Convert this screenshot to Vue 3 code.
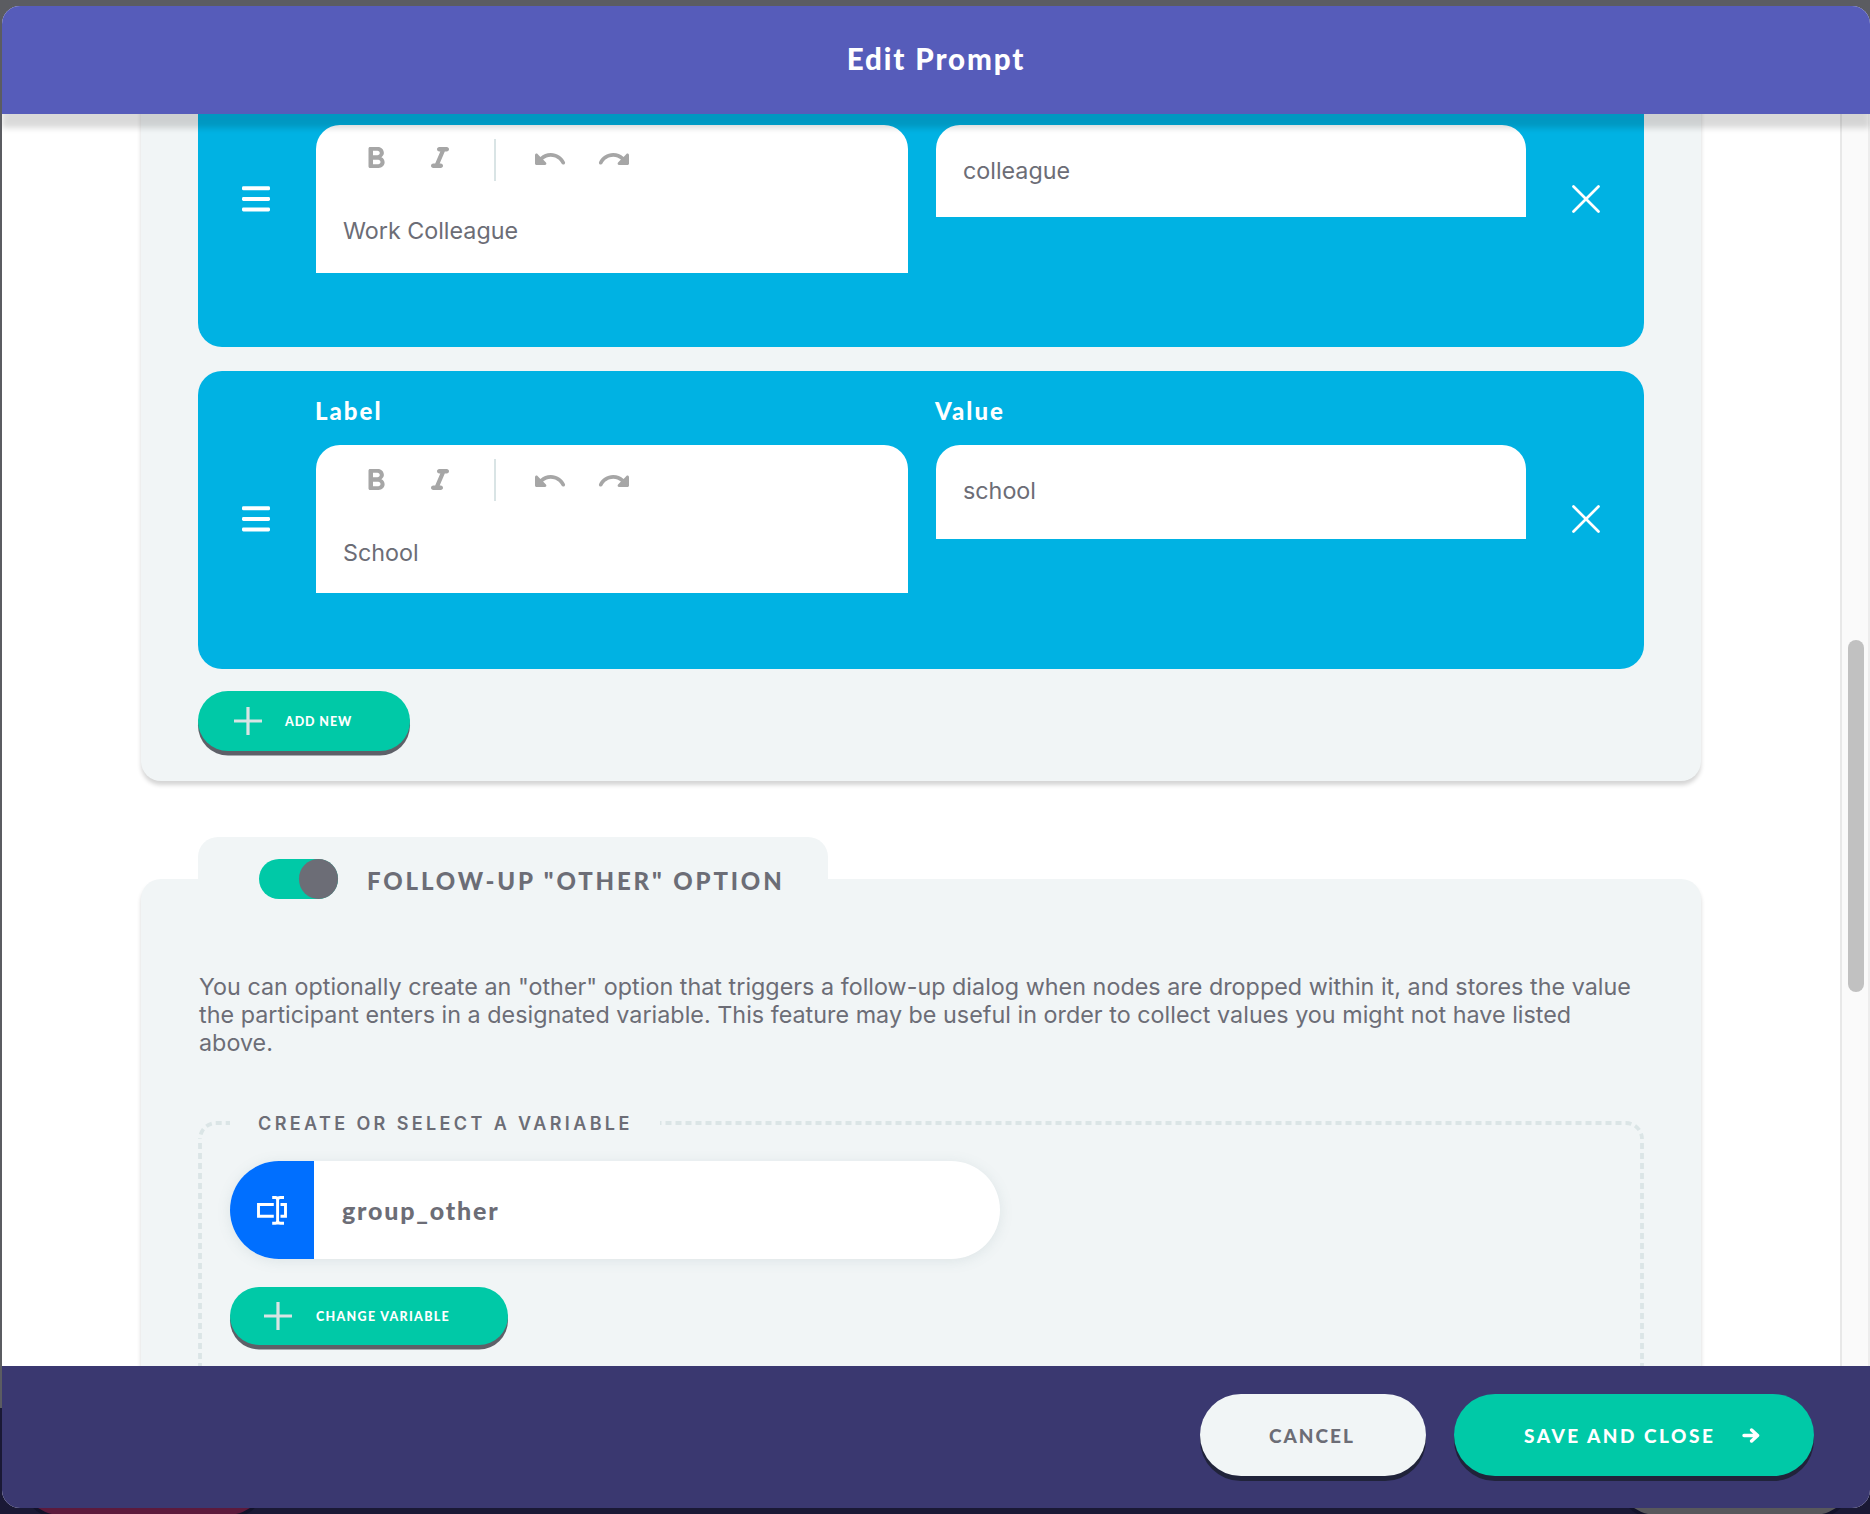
<script setup>
const options = [
  { id: 'colleague', label: 'Work Colleague', value: 'colleague', compact: true },
  { id: 'school', label: 'School', value: 'school', compact: false },
]

const icons = {
  bold: 'M15.6 10.79c.97-.67 1.65-1.77 1.65-2.79 0-2.26-1.75-4-4-4H8c-.55 0-1 .45-1 1v12c0 .55.45 1 1 1h5.78c2.07 0 3.96-1.69 3.97-3.77.01-1.53-.85-2.84-2.15-3.44zM10 6.5h3c.83 0 1.5.67 1.5 1.5s-.67 1.5-1.5 1.5h-3v-3zm3.5 9H10v-3h3.5c.83 0 1.5.67 1.5 1.5s-.67 1.5-1.5 1.5z',
  italic: 'M10 5.5c0 .83.67 1.5 1.5 1.5h.71l-3.42 8H7.5c-.83 0-1.5.67-1.5 1.5S6.67 18 7.5 18h5c.83 0 1.5-.67 1.5-1.5s-.67-1.5-1.5-1.5h-.71l3.42-8h1.29c.83 0 1.5-.67 1.5-1.5S17.33 4 16.5 4h-5c-.83 0-1.5.67-1.5 1.5z',
  undo: 'M12.5 8c-2.65 0-5.05.99-6.9 2.6L3.71 8.71C3.08 8.08 2 8.52 2 9.41V15c0 .55.45 1 1 1h5.59c.89 0 1.34-1.08.71-1.71l-1.91-1.91c1.39-1.16 3.16-1.88 5.12-1.88 3.16 0 5.89 1.84 7.19 4.5.27.56.91.84 1.5.64.71-.23 1.07-1.04.75-1.72C20.23 10.42 16.65 8 12.5 8z',
}
</script>

<template>
  <div class="backdrop">
    <div class="behind">
      <span class="behind-delete"></span>
      <span class="behind-cancel"></span>
    </div>
    <div class="modal">
      <header class="head"><h1>Edit Prompt</h1></header>

      <main class="body">
        <div class="content">
          <section class="panel options">
            <div v-for="o in options" :key="o.id" class="card" :class="{ compact: o.compact }">
              <div class="side handle">
                <svg width="28" height="26" viewBox="0 0 28 26">
                  <rect width="28" height="4" rx="1.4" y="0.3" /><rect width="28" height="4" rx="1.4" y="11" /><rect width="28" height="4" rx="1.4" y="21.5" />
                </svg>
              </div>
              <div class="col">
                <h4 v-if="!o.compact">Label</h4>
                <div class="field editor">
                  <div class="toolbar">
                    <svg class="tool" viewBox="0 0 24 24"><path :d="icons.bold" /></svg>
                    <svg class="tool" viewBox="0 0 24 24"><path :d="icons.italic" /></svg>
                    <i class="divider"></i>
                    <svg class="tool" viewBox="0 0 24 24"><path :d="icons.undo" /></svg>
                    <svg class="tool flip" viewBox="0 0 24 24"><path :d="icons.undo" /></svg>
                  </div>
                  <p>{{ o.label }}</p>
                </div>
              </div>
              <div class="col">
                <h4 v-if="!o.compact">Value</h4>
                <div class="field input"><p>{{ o.value }}</p></div>
              </div>
              <div class="side remove">
                <svg width="28" height="28" viewBox="0 0 28 28">
                  <path d="M1.5 1.5 26.5 26.5M26.5 1.5 1.5 26.5" stroke="#fff" stroke-width="2.7" stroke-linecap="round" />
                </svg>
              </div>
            </div>
            <button class="add">
              <svg width="28" height="28" viewBox="0 0 28 28"><path d="M14 0V28M0 14H28" /></svg>
              <span>ADD NEW</span>
            </button>
          </section>

          <section class="panel other">
            <div class="tab">
              <span class="toggle"><i></i></span>
              <h2>FOLLOW-UP "OTHER" OPTION</h2>
            </div>
            <p class="intro">
              You can optionally create an "other" option that triggers a follow-up dialog when nodes are dropped within it, and stores the value<br />
              the participant enters in a designated variable. This feature may be useful in order to collect values you might not have listed<br />
              above.
            </p>
            <div class="fieldset">
              <svg class="outline" width="1446" height="420" viewBox="0 0 1446 420">
                <path d="M32 2H18A16 16 0 0 0 2 18" stroke-dashoffset="1.7" />
                <path d="M2 22V420" />
                <path d="M462 2H1428A16 16 0 0 1 1444 18" stroke-dashoffset="4.5" />
                <path d="M1444 22V420" />
              </svg>
              <h3>CREATE OR SELECT A VARIABLE</h3>
              <div class="pill">
                <div class="kind">
                  <svg width="30" height="29" viewBox="0 0 30 29">
                    <path d="M16.8 8.5H1.5V20.2H16.8M23.5 8.5H28.5V20.2H23.5M15.2 1.5H18.4Q20.6 1.5 20.6 4V25Q20.6 27.2 18.4 27.2H15.2M27 1.5H23.4Q20.6 1.5 20.6 4M27 27.2H23.4Q20.6 27.2 20.6 25" />
                  </svg>
                </div>
                <span>group_other</span>
              </div>
              <button class="add change">
                <svg width="28" height="28" viewBox="0 0 28 28"><path d="M14 0V28M0 14H28" /></svg>
                <span>CHANGE VARIABLE</span>
              </button>
            </div>
          </section>
        </div>
        <div class="scrollbar"><i></i></div>
      </main>

      <footer class="foot">
        <button class="cancel"><span>CANCEL</span></button>
        <button class="save">
          <span>SAVE AND CLOSE</span>
          <svg width="18" height="15" viewBox="0 0 18 15"><path d="M2 7.5H15M9.6 2 15.6 7.5 9.6 13" /></svg>
        </button>
      </footer>
    </div>
  </div>
</template>

<style>
body {
  margin: 0;
}
</style>

<style scoped>
* {
  box-sizing: border-box;
}
h1, h2, h3, h4, p {
  margin: 0;
  white-space: nowrap;
}
.backdrop {
  position: relative;
  width: 1870px;
  height: 1514px;
  padding: 6px 0 6px 2px;
  overflow: hidden;
  background: linear-gradient(#5b5c61 0 1408px, #1a1935 1408px);
  font-family: Inter, "Liberation Sans", sans-serif;
  color: #6c6d76;
}
.behind {
  position: absolute;
  left: 0;
  right: 0;
  bottom: 0;
  height: 90px;
}
.behind span {
  position: absolute;
  bottom: -1px;
  height: 82px;
  border-radius: 41px;
  box-shadow: 0 4px #12122a;
}
.behind-delete {
  left: 20px;
  width: 248px;
  background: #5c1a3c;
}
.behind-cancel {
  right: 16px;
  width: 238px;
  background: #58585c;
}
.modal {
  position: relative;
  display: flex;
  flex-direction: column;
  width: 1868px;
  height: 1502px;
  border-radius: 18px;
  overflow: hidden;
  background: #fff;
}
.head {
  position: relative;
  z-index: 2;
  flex: none;
  display: flex;
  justify-content: center;
  height: 108px;
  background: #565cba;
  box-shadow: 0 14px 6px rgba(0, 0, 0, 0.15);
}
h1 {
  margin-top: 33px;
  font: 900 29.5px/40px Lato, sans-serif;
  letter-spacing: 1.9px;
  color: #fff;
}
.body {
  flex: none;
  display: flex;
  height: 1252px;
  overflow: hidden;
}
.content {
  flex: 1;
  padding-left: 139px;
}
.scrollbar {
  width: 30px;
  padding: 526px 0 0 6px;
  border-left: 2px solid #e8e8e8;
  border-right: 2px solid #ededed;
  background: #fafafa;
}
.scrollbar i {
  display: block;
  width: 16px;
  height: 352px;
  border-radius: 8px;
  background: #c1c1c1;
}
.panel {
  width: 1560px;
  padding: 0 57px;
  border-radius: 20px;
  background: #f1f5f6;
  box-shadow: 0 4px 4px rgba(0, 0, 0, 0.17);
}
.options {
  height: 747px;
  margin-top: -80px;
  padding-top: 17px;
}
.card {
  display: grid;
  grid-template-columns: 118px 592px 618px 118px;
  width: 1446px;
  height: 298px;
  margin-bottom: 22px;
  border-radius: 24px;
  background: #00b2e3;
}
.card.compact {
  height: 296px;
  margin-bottom: 24px;
}
.compact .col {
  padding-top: 74px;
}
.card .col + .col {
  margin-left: 28px;
}
.side {
  display: flex;
  align-items: center;
  justify-content: center;
}
.side svg {
  fill: #fff;
  margin-top: -3px;
}
.compact .side svg {
  margin-top: -1px;
}
.handle {
  padding-right: 2px;
}
.remove {
  padding-left: 2px;
}
h4 {
  height: 74px;
  padding-top: 24px;
  margin-left: -1px;
  font: 900 24px/32px Lato, sans-serif;
  letter-spacing: 2px;
  color: #fff;
}
.field {
  border-radius: 24px 24px 0 0;
  background: #fff;
}
.field p {
  padding-left: 27px;
  font-size: 23.3px;
  line-height: 32px;
}
.editor {
  height: 148px;
}
.editor p {
  padding-top: 35.5px;
}
.compact .editor p {
  padding-top: 33.5px;
}
.input {
  height: 94px;
  padding-top: 29.5px;
}
.compact .input {
  height: 92px;
}
.toolbar {
  display: flex;
  align-items: center;
  height: 56px;
  padding: 14px 0 0 42px;
}
.tool {
  width: 36px;
  height: 36px;
  margin-right: 28px;
  fill: #a6a6a6;
  transform: translateY(1px);
}
.compact .tool {
  transform: translateY(-1px);
}
.tool.flip {
  transform: translateY(1px) scaleX(-1);
}
.compact .tool.flip {
  transform: translateY(-1px) scaleX(-1);
}
.divider {
  width: 2px;
  height: 42px;
  margin: 0 36px 0 8px;
  background: #d9e4e5;
}
button {
  display: flex;
  align-items: center;
  border: 0;
  padding: 0;
  font-family: Lato, sans-serif;
  font-weight: 900;
  white-space: nowrap;
}
.add {
  width: 212px;
  height: 60px;
  padding-left: 36px;
  gap: 23px;
  border-radius: 30px;
  background: #00c9a7;
  box-shadow: 0 4.5px #5e6068;
  color: #fff;
  font-size: 12.5px;
  letter-spacing: 0.9px;
}
.add svg {
  flex: none;
  stroke: #d9e4e4;
  stroke-width: 3.2;
}
.other {
  height: 800px;
  margin-top: 98px;
}
.tab {
  position: relative;
  top: -42px;
  display: flex;
  width: 630px;
  height: 80px;
  margin-bottom: -80px;
  padding: 22px 0 0 61px;
  border-radius: 20px 20px 0 0;
  background: #f1f5f6;
}
.toggle {
  display: flex;
  justify-content: flex-end;
  width: 79px;
  height: 39.5px;
  border-radius: 20px;
  background: #00c9a7;
}
.toggle i {
  width: 39.5px;
  border-radius: 50%;
  background: #6c6d76;
}
h2 {
  margin: 5px 0 0 29px;
  font: 900 24px/34px Lato, sans-serif;
  letter-spacing: 2.85px;
}
.intro {
  padding: 93.5px 0 0 1px;
  font-size: 23.3px;
  line-height: 28px;
  letter-spacing: 0.028px;
}
.fieldset {
  position: relative;
  height: 420px;
  margin-top: 64px;
  padding: 1px 0 0 32px;
}
.outline {
  position: absolute;
  top: 0;
  left: 0;
  fill: none;
  stroke: #dbe5e6;
  stroke-width: 3.8;
  stroke-dasharray: 6 4;
}
h3 {
  margin-top: -11px;
  padding-left: 28px;
  font-size: 18px;
  font-weight: 600;
  line-height: 26px;
  letter-spacing: 3.38px;
}
.pill {
  display: flex;
  align-items: center;
  width: 770px;
  height: 98px;
  margin-top: 24.5px;
  border-radius: 49px;
  overflow: hidden;
  background: #fff;
  box-shadow: 0 2px 14px rgba(90, 120, 130, 0.13);
}
.kind {
  display: flex;
  align-items: center;
  width: 84px;
  height: 98px;
  padding-left: 27px;
  background: #006fff;
}
.kind svg {
  fill: none;
  stroke: #fff;
  stroke-width: 2.9;
}
.pill span {
  margin-left: 28px;
  font: 900 25px/32px Lato, sans-serif;
  letter-spacing: 1.8px;
}
.change {
  width: 278px;
  height: 58px;
  margin-top: 28px;
  padding-left: 34px;
  gap: 24px;
  letter-spacing: 1.3px;
}
.foot {
  flex: none;
  display: flex;
  justify-content: flex-end;
  gap: 28px;
  height: 142px;
  padding: 28px 56px 0 0;
  background: #3a3870;
}
.foot button {
  height: 82px;
  border-radius: 41px;
  box-shadow: 0 5px #20233a;
  font-size: 19px;
  letter-spacing: 2px;
}
.foot .cancel {
  width: 226px;
  padding-left: 69px;
  background: #f1f5f6;
  color: #6c6d76;
}
.foot .save {
  width: 360px;
  padding-left: 70px;
  background: #00c9a7;
  color: #fff;
  letter-spacing: 2.5px;
}
.save svg {
  margin: 1px 0 0 27px;
  fill: none;
  stroke: #fff;
  stroke-width: 3.4;
  stroke-linecap: round;
  stroke-linejoin: round;
}
</style>
